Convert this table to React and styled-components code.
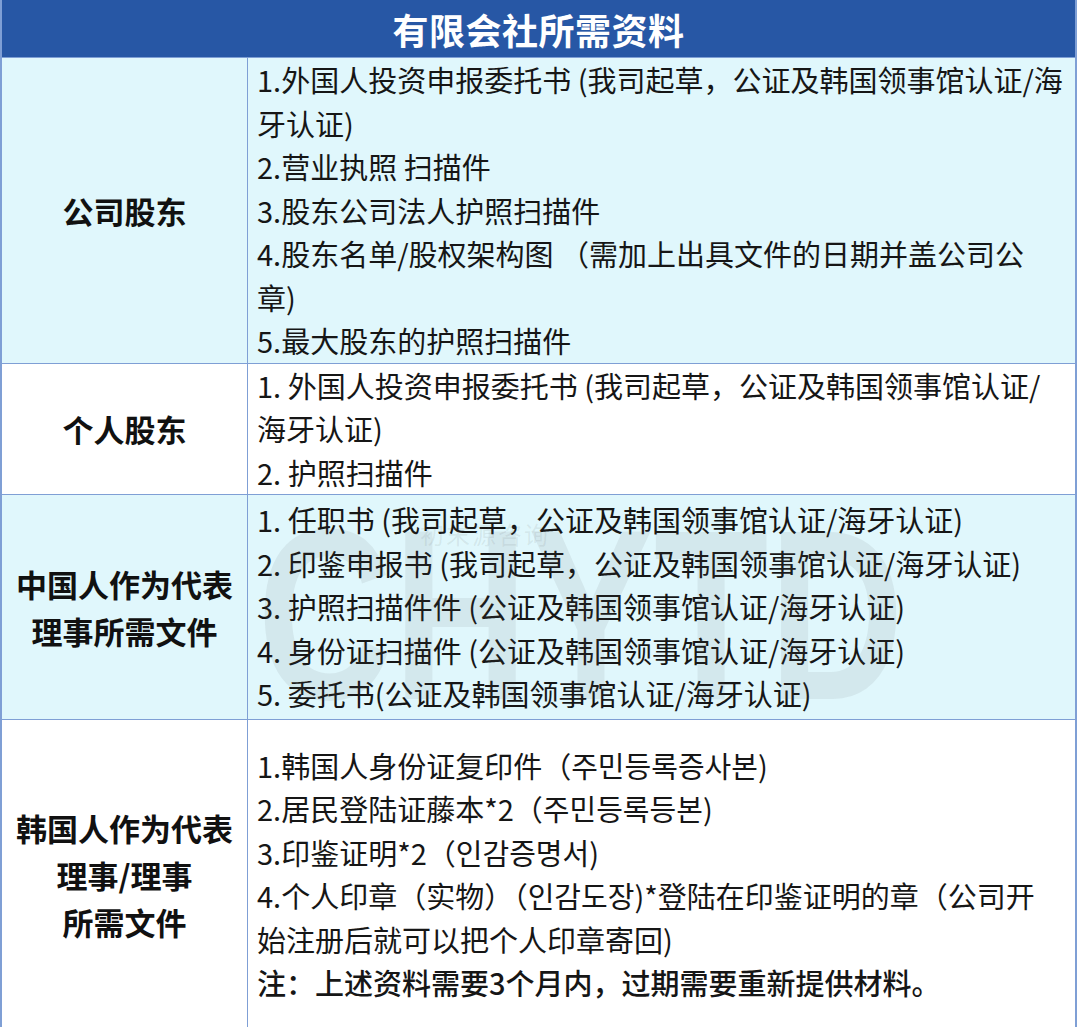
import styled, { createGlobalStyle } from 'styled-components'

const GlobalStyle = createGlobalStyle`
    html, body {
        margin: 0;
        padding: 0;
        background: #ffffff;
    }
    body {
        font-family: "Noto Sans CJK SC", "Noto Sans CJK KR", "Noto Sans", sans-serif;
        color: #161616;
    }
`

const Table = styled.div`
    position: relative;
    width: 1077px;
    box-sizing: border-box;
    border: 2px solid #7f9fd5;
    border-top: none;
    overflow: hidden;
`

const Header = styled.div`
    height: 57px;
    background: #2757a5;
    color: #ffffff;
    font-size: 36px;
    font-weight: 700;
    display: flex;
    align-items: center;
    justify-content: center;
    border-bottom: 1px solid #7f9fd5;
    letter-spacing: 0.5px;
`

const Row = styled.div`
    display: grid;
    grid-template-columns: 246px 1fr;
    background: ${(props) => (props.tinted ? '#e0f7fc' : '#ffffff')};
    border-bottom: ${(props) => (props.last ? 'none' : '1.5px solid #7f9fd5')};
`

const Label = styled.div`
    display: flex;
    align-items: center;
    justify-content: center;
    text-align: center;
    font-size: 31px;
    font-weight: 700;
    line-height: 47px;
    border-right: 1.5px solid #7f9fd5;
    color: #111111;
`

const Content = styled.div`
    display: flex;
    flex-direction: column;
    justify-content: center;
    padding: ${(props) => props.pad || '0'} 0 ${(props) => props.pad || '0'} 9px;
    font-size: 29px;
    line-height: 43.5px;
`

const Line = styled.div`
    white-space: nowrap;
    font-weight: ${(props) => (props.strong ? 500 : 400)};
`

const Watermark = styled.div`
    position: absolute;
    left: 255px;
    top: 493px;
    font-family: "Liberation Sans", sans-serif;
    font-size: 244px;
    font-weight: 700;
    line-height: 1;
    color: rgba(90, 90, 90, 0.09);
    transform: scaleX(0.77);
    transform-origin: left top;
    pointer-events: none;
`

const WatermarkCn = styled.div`
    position: absolute;
    left: 418px;
    top: 516px;
    font-size: 24px;
    letter-spacing: 2px;
    color: rgba(90, 90, 90, 0.1);
    pointer-events: none;
`

const rows = [
    {
        label: ['公司股东'],
        tinted: true,
        lines: [
            '1.外国人投资申报委托书 (我司起草，公证及韩国领事馆认证/海',
            '牙认证)',
            '2.营业执照 扫描件',
            '3.股东公司法人护照扫描件',
            '4.股东名单/股权架构图 （需加上出具文件的日期并盖公司公',
            '章)',
            '5.最大股东的护照扫描件',
        ],
    },
    {
        label: ['个人股东'],
        lines: [
            '1. 外国人投资申报委托书 (我司起草，公证及韩国领事馆认证/',
            '海牙认证)',
            '2. 护照扫描件',
        ],
    },
    {
        label: ['中国人作为代表', '理事所需文件'],
        tinted: true,
        pad: '3px',
        lines: [
            '1. 任职书 (我司起草，公证及韩国领事馆认证/海牙认证)',
            '2. 印鉴申报书 (我司起草，公证及韩国领事馆认证/海牙认证)',
            '3. 护照扫描件件 (公证及韩国领事馆认证/海牙认证)',
            '4. 身份证扫描件 (公证及韩国领事馆认证/海牙认证)',
            '5. 委托书(公证及韩国领事馆认证/海牙认证)',
        ],
    },
    {
        label: ['韩国人作为代表', '理事/理事', '所需文件'],
        pad: '24px',
        last: true,
        lines: [
            '1.韩国人身份证复印件（주민등록증사본)',
            '2.居民登陆证藤本*2（주민등록등본)',
            '3.印鉴证明*2（인감증명서)',
            '4.个人印章（实物）（인감도장)*登陆在印鉴证明的章（公司开',
            '始注册后就可以把个人印章寄回)',
            { text: '注：上述资料需要3个月内，过期需要重新提供材料。', strong: true },
        ],
    },
]

export default function App() {
    return (
        <>
            <GlobalStyle />
            <Table>
                <Header>有限会社所需资料</Header>
                {rows.map((row, i) => (
                    <Row key={i} tinted={row.tinted} last={row.last}>
                        <Label>
                            <div>
                                {row.label.map((l) => (
                                    <div key={l}>{l}</div>
                                ))}
                            </div>
                        </Label>
                        <Content pad={row.pad}>
                            {row.lines.map((line, j) =>
                                typeof line === 'string' ? (
                                    <Line key={j}>{line}</Line>
                                ) : (
                                    <Line key={j} strong={line.strong}>{line.text}</Line>
                                )
                            )}
                        </Content>
                    </Row>
                ))}
                <Watermark>CHYTD</Watermark>
                <WatermarkCn>初末源咨询</WatermarkCn>
            </Table>
        </>
    )
}
